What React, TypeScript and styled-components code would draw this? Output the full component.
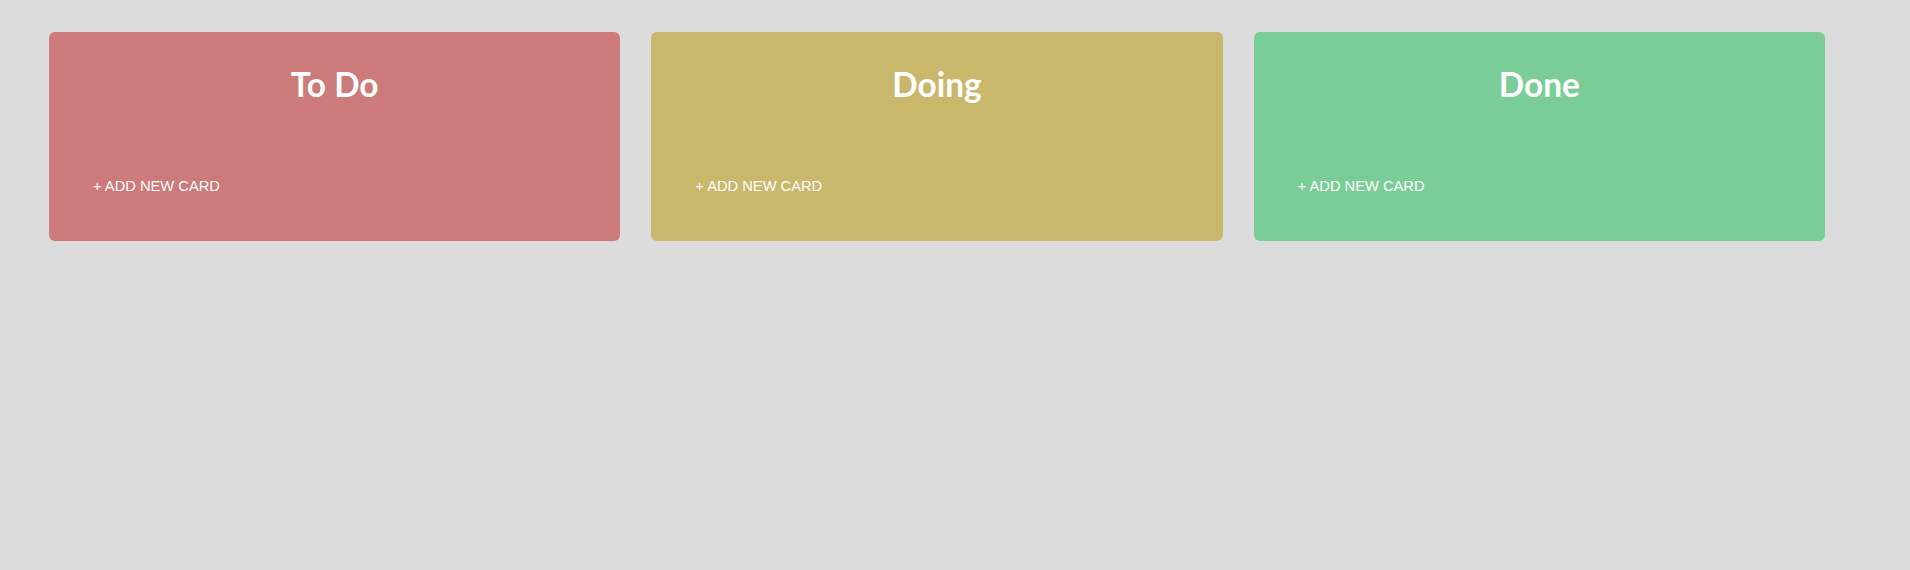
import React from "react";
import styled, { createGlobalStyle } from "styled-components";

const GlobalStyle = createGlobalStyle`
  html, body {
    margin: 0;
    padding: 0;
    background: #dcdcdc;
    min-height: 100%;
  }
  body {
    margin: 8px;
    font-family: "Liberation Sans", Arial, sans-serif;
  }
`;

const Page = styled.div`
  min-height: 554px;
  background: #dcdcdc;
`;

const Board = styled.div`
  display: flex;
  gap: 31px;
  width: 1776px;
  padding: 24px 0 0 41px;
  align-items: flex-start;
`;

const Column = styled.section<{ $bg: string }>`
  flex: 1 1 0;
  display: flex;
  flex-direction: column;
  background: ${(p) => p.$bg};
  border-radius: 6px;
  padding: 33px 44px 46px;
  height: 209px;
  box-sizing: border-box;
`;

const Title = styled.h2`
  margin: 0;
  text-align: center;
  font-family: Lato, "Open Sans", sans-serif;
  font-weight: 700;
  font-size: 33.4px;
  line-height: 38px;
  color: #ffffff;
`;

const AddButton = styled.button`
  align-self: flex-start;
  margin-top: 75px;
  padding: 0;
  border: none;
  background: transparent;
  color: #ffffff;
  font-family: "Liberation Sans", Arial, sans-serif;
  font-size: 14.7px;
  line-height: 16px;
  cursor: pointer;
`;

const columns = [
  { title: "To Do", bg: "#cc7a7a" },
  { title: "Doing", bg: "#c9b76c" },
  { title: "Done", bg: "#7bcd97" },
];

export default function App() {
  return (
    <Page>
      <GlobalStyle />
      <Board>
        {columns.map((c) => (
          <Column key={c.title} $bg={c.bg}>
            <Title>{c.title}</Title>
            <AddButton type="button">+ ADD NEW CARD</AddButton>
          </Column>
        ))}
      </Board>
    </Page>
  );
}
